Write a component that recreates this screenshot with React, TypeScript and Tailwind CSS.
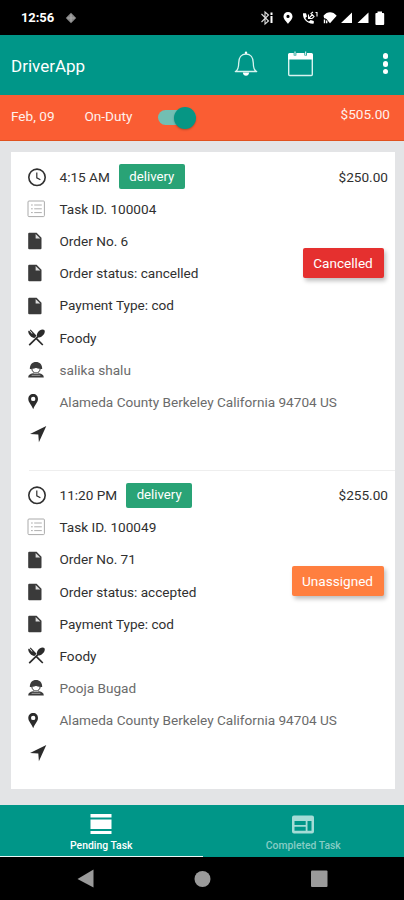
import React from "react";

type Task = {
  time: string;
  price: string;
  id: string;
  order: string;
  status: string;
  name: string;
  badge: string;
  badgeClass: string;
};

const tasks: Task[] = [
  {
    time: "4:15 AM",
    price: "$250.00",
    id: "100004",
    order: "6",
    status: "cancelled",
    name: "salika shalu",
    badge: "Cancelled",
    badgeClass: "top-[96px] w-[81px] bg-[#e5302f]",
  },
  {
    time: "11:20 PM",
    price: "$255.00",
    id: "100049",
    order: "71",
    status: "accepted",
    name: "Pooja Bugad",
    badge: "Unassigned",
    badgeClass: "top-[95.5px] w-[92px] bg-[#ff7f3f]",
  },
];

const svg = "block h-5 w-5 shrink-0";

const Clock = () => (
  <svg className={svg} viewBox="0 0 20 20" fill="none" stroke="#303030">
    <circle cx="10" cy="10.300" r="8.200" strokeWidth="1.600" />
    <path d="M9.800 5.600v5.200l3.600 2" strokeWidth="1.200" />
  </svg>
);
const ListIcon = () => (
  <svg className={svg} viewBox="0 0 20 20" fill="none">
    <rect x="1" y="2" width="16.4" height="15.6" rx="1" stroke="#aaa" strokeWidth="1" />
    <path d="M4 6h1.8M4 9.8h1.8M4 13.6h1.8M7.2 6h7.6M7.2 9.8h7.6M7.2 13.6h7.6" stroke="#b0b0b0" />
  </svg>
);
const Doc = () => (
  <svg className={svg} viewBox="0 0 20 20">
    <path d="M2.200 1.700h7.400l4.900 5v10.600a1 1 0 0 1-1 1H2.200a1 1 0 0 1-1-1V2.700a1 1 0 0 1 1-1z" fill="#3a3a3a" />
    <path d="M8.600 3v4.600h4.700z" fill="#ddd" />
  </svg>
);
const Food = () => (
  <svg className={svg} viewBox="0 0 20 20" fill="#2b2b2b">
    <path d="M1.2 3.2 2 2.6l3 3.1.5-.5-2.7-3 .8-.6 6 6.1-2.2 2.2C4.700 10 1.300 6.600 1.200 3.200z" />
    <path d="M8 10.500 9.300 9.300 16.400 16.400 15.200 17.600z" />
    <path d="M11.200 9.500 2.800 17.800 1.600 16.600 10 8.300C9.400 6.400 10.600 4.100 12.600 2.600c1.800-1.300 3.900-1.400 4.700-.5.900.9.600 3-.8 4.700-1.500 1.900-3.600 3.200-5.300 2.700z" />
  </svg>
);
const Person = () => (
  <svg className={svg} viewBox="0 0 20 20">
    <path d="M2.800 9C2.800 4.600 5.300 2 9 2s6.200 2.600 6.200 7z" fill="#3a3a3a" />
    <path d="M4.800 8.200c1.700.1 3.100-.2 4.200-.8 1.100.6 2.500.9 4.200.8 0 3-1.800 4.800-4.200 4.800s-4.200-1.800-4.200-4.800z" fill="#fff" stroke="#3a3a3a" strokeWidth="1" />
    <path d="M1.200 17.600c0-2.600 1.700-3.700 4.900-4.300 1.700.9 4.100.9 5.800 0 3.200.6 4.900 1.700 4.900 4.300z" fill="#3a3a3a" />
    <path d="M4.600 15.300h8.800" stroke="#aaa" strokeWidth=".9" />
  </svg>
);
const Pin = () => (
  <svg className={svg} viewBox="0 0 20 20">
    <path fillRule="evenodd" fill="#2b2b2b" d="M6.200 2C3.300 2 1.300 4.100 1.300 6.900c0 3.400 3.400 5.800 4.900 10.300C7.700 12.700 11 10.300 11 6.900 11 4.100 9.100 2 6.200 2zm0 2.700a2.200 2.200 0 1 1 0 4.400 2.200 2.200 0 0 1 0-4.400z" />
  </svg>
);
const Nav = () => (
  <svg className={svg} viewBox="0 0 20 20">
    <path d="M19.300 1.900 3 9.900l8.300.7.600 7.600z" fill="#2b2b2b" />
  </svg>
);

const Row = ({ icon, children, light = false }: { icon: React.ReactNode; children?: React.ReactNode; light?: boolean }) => (
  <div className={`flex h-[32.2px] items-center ${light ? "text-[#6b6b6b]" : "text-[#303030]"}`}>
    {icon}
    <span className="ml-[13px] whitespace-nowrap">{children}</span>
  </div>
);

const TaskItem = ({ t }: { t: Task }) => (
  <section className="relative h-[318.500px] pl-[15.500px] pr-[6.500px] pt-[9.200px] text-[13.600px]">
    <div className="flex h-[32.200px] items-center text-[#303030]">
      <Clock />
      <span className="ml-[13px] whitespace-nowrap">{t.time}</span>
      <span className="ml-[9px] flex h-[25px] w-[66px] items-center justify-center rounded-[2px] bg-[#29a376] text-[13.200px] text-white">delivery</span>
      <span className="ml-auto">{t.price}</span>
    </div>
    <Row icon={<ListIcon />}>Task ID. {t.id}</Row>
    <Row icon={<Doc />}>Order No. {t.order}</Row>
    <Row icon={<Doc />}>Order status: {t.status}</Row>
    <Row icon={<Doc />}>Payment Type: cod</Row>
    <Row icon={<Food />}>Foody</Row>
    <Row icon={<Person />} light>{t.name}</Row>
    <Row icon={<Pin />} light>Alameda County Berkeley California 94704 US</Row>
    <Row icon={<Nav />} />
    <span className={`absolute right-[11px] flex h-[30.500px] items-center justify-center rounded-[2px] text-[13.600px] text-white shadow-[2px_3px_4px_rgba(0,0,0,0.25)] ${t.badgeClass}`}>
      {t.badge}
    </span>
  </section>
);

const StatusIcons = () => (
  <svg className="h-[36px] w-[130px]" viewBox="256 0 130 36" fill="#fff">
    <path d="m261.500 14 7 7-3.500 3V12l3.500 3-7 7" fill="none" stroke="#ddd" strokeWidth="1.100" />
    <path d="M271.500 12.500v2.500M271.500 16v7" stroke="#fff" strokeWidth="2" />
    <path fillRule="evenodd" d="M288 12c-2.700 0-4.500 1.900-4.500 4.400 0 3 3 4.800 4.500 7.600 1.500-2.800 4.500-4.600 4.500-7.600 0-2.500-1.800-4.400-4.500-4.400zm0 2.800a1.600 1.600 0 1 1 0 3.200 1.600 1.600 0 0 1 0-3.200z" />
    <path d="M303 13.200h3l1 3.200-1.700 1.600c1 1.800 2 2.800 3.700 3.500l1.600-1.500 3.200 1v2.600c-6.500.5-11.300-4.500-10.800-10.400z" />
    <path d="M308.500 14.500v4h4M309 18l3.500-3.500M313 12l-2 1.500 3 3-1.500 1.500M315.500 12.500h1.500v4" fill="none" stroke="#fff" strokeWidth="1.100" />
    <path d="M323.500 15.700c3.800-4.600 9.300-4.600 13.200 0L330 23.300l-1.800-2c-.6-1.700-2-2.900-4-3.100z" />
    <path d="M324.500 19.500v3.700M326.700 20.500v2.700" stroke="#fff" strokeWidth="1.400" />
    <path d="M352 12.500v10.600h-11zM368.500 12.500v10.600h-11z" />
    <path d="M377.500 11.500h4.500v1.600h1.300a.9.900 0 0 1 .9.900v10a.9.900 0 0 1-.9.900h-7a.9.900 0 0 1-.9-.9V14a.9.900 0 0 1 .9-.9h1.200z" />
  </svg>
);

const Bell = () => (
  <svg className="h-[30px] w-[28px]" viewBox="232 50 28 30" fill="none" stroke="#d8f3ef" strokeWidth="1.300">
    <path d="M235.300 71.500c2.800-1.200 3.400-3.400 3.400-8.500 0-5.500 2.800-9 7.300-9s7.300 3.500 7.300 9c0 5.100.6 7.300 3.400 8.500z" strokeLinejoin="round" />
    <circle cx="246" cy="52.700" r="1.200" fill="#fff" stroke="none" />
    <path d="M242.800 72.500h6.400c-.2 2-1.500 3.300-3.200 3.300s-3-1.300-3.200-3.300z" fill="#fff" stroke="none" />
  </svg>
);

const Calendar = () => (
  <svg className="h-[30px] w-[28px]" viewBox="286 50 28 30" fill="none">
    <rect x="288.700" y="54.500" width="23.600" height="21" rx="1" stroke="#d8f3ef" strokeWidth="1.400" />
    <path d="M288 54.500a1.500 1.500 0 0 1 1.500-1.500h22a1.500 1.500 0 0 1 1.500 1.500v5h-25z" fill="#fff" />
    <path d="M295 51.500v4M305.700 51.500v4" stroke="#009688" strokeWidth="2.600" />
    <path d="M295 51.500v3.500M305.700 51.500v3.500" stroke="#fff" strokeWidth="1" />
  </svg>
);

export default function App() {
  return (
    <div className="flex h-[900px] w-[404px] flex-col overflow-hidden bg-[#e3e4e6] font-['Roboto',sans-serif]">
      <div className="flex h-[35px] items-center bg-black text-white">
        <span className="ml-[21px] w-[33px] whitespace-nowrap text-[13px] font-bold tracking-[-0.100px]">12:56</span>
        <svg className="ml-[11px] h-[12px] w-[12px]" viewBox="0 0 12 12">
          <path d="m6 .8 5.200 5.200L6 11.200.8 6z" fill="#888" />
          <path d="M6 2.500v7M2.500 6h7" stroke="#aaa" strokeWidth="1.200" />
        </svg>
        <span className="ml-auto mr-[18px]"><StatusIcons /></span>
      </div>

      <header className="flex h-[59.500px] items-center bg-[#009688] text-white">
        <h1 className="ml-[11px] w-[221px] pt-[3px] text-[17px] font-normal">DriverApp</h1>
        <Bell />
        <span className="ml-[26px]"><Calendar /></span>
        <span className="mb-[2px] ml-auto mr-[16px] flex flex-col gap-[2.200px]">
          <i className="block h-[5.500px] w-[5.500px] rounded-full bg-white" />
          <i className="block h-[5.500px] w-[5.500px] rounded-full bg-white" />
          <i className="block h-[5.500px] w-[5.500px] rounded-full bg-white" />
        </span>
      </header>

      <div className="flex h-[46.500px] items-center border-b border-[#e0521f] bg-[#fa5d33] text-[13.600px] text-[#fff1ec]">
        <span className="mb-[3px] ml-[11px] w-[73.500px] whitespace-nowrap">Feb, 09</span>
        <span className="mb-[3px] w-[73.500px] whitespace-nowrap">On-Duty</span>
        <span className="mt-px flex h-[15px] w-[38px] items-center justify-end rounded-full bg-[#72bfb3]">
          <i className="block h-[22px] w-[22px] shrink-0 rounded-full bg-[#069684] shadow-[0_1px_2px_rgba(0,0,0,0.250)]" />
        </span>
        <span className="mb-[7px] ml-auto mr-[14px]">$505.00</span>
      </div>

      <main className="min-h-0 flex-1 px-[10px] pt-[10.500px]">
        <div className="ml-px h-[637px] w-[383.500px] bg-white">
          <TaskItem t={tasks[0]} />
          <div className="ml-[18px] h-px bg-[#eee]" />
          <div className="-mt-px">
            <TaskItem t={tasks[1]} />
          </div>
        </div>
      </main>

      <nav className="flex h-[51.500px] bg-[#009688] text-[10.400px]">
        <div className="flex w-[202.500px] flex-col items-center border-b-[1.500px] border-[#e8f7f5] text-white">
          <svg className="mt-[9px] h-[21px] w-[22px]" viewBox="0 0 22 21" fill="#fff">
            <path d="M.5 0h21v3.500H.5zM.5 5.500h21V15H.5zM.5 17h21v3H.5z" />
          </svg>
          <span className="mt-[3px] font-medium">Pending Task</span>
        </div>
        <div className="flex flex-1 flex-col items-center text-[#86cdc5]">
          <svg className="mt-[9px] h-[21px] w-[22px]" viewBox="0 0 22 21">
            <path fillRule="evenodd" fill="#a5dcd6" d="M2 1.500h18A2 2 0 0 1 22 3.500v14a2 2 0 0 1-2 2H2a2 2 0 0 1-2-2v-14A2 2 0 0 1 2 1.500zM2.500 7v4h11.200V7zm0 5.700v4h11.200v-4zM15.500 7v9.700h4V7z" />
          </svg>
          <span className="mt-[3px] font-medium">Completed Task</span>
        </div>
      </nav>

      <div className="flex h-[43.500px] items-center bg-black">
        <svg className="h-full w-full" viewBox="0 856.500 404 43.500" fill="#9a9a9a">
          <path d="M77.500 878.500 93.500 869v18z" />
          <circle cx="202.500" cy="878.500" r="8" />
          <rect x="311" y="870" width="16.500" height="16.500" rx="1" />
        </svg>
      </div>
    </div>
  );
}
